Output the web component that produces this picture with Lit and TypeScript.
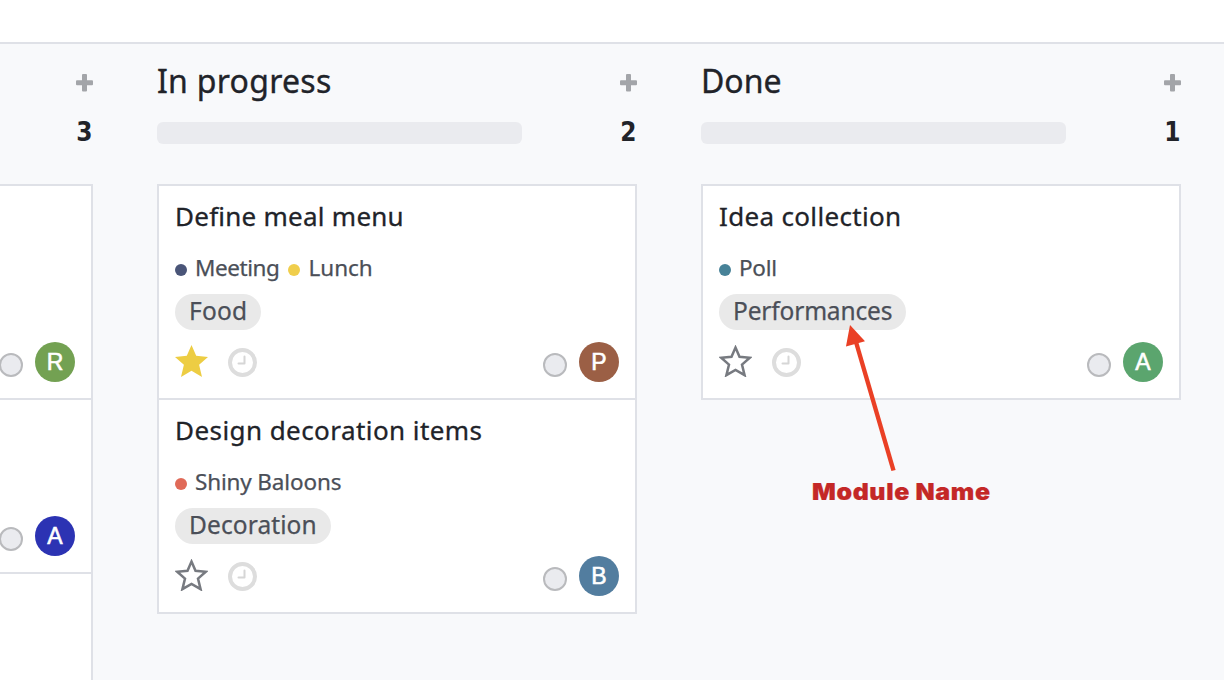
import { LitElement, html, css, svg } from "lit";
import { customElement, property } from "lit/decorators.js";

/** Single-line text whose tracking is adjusted so that it fills `width` pixels. */
@customElement("fit-text")
class FitText extends LitElement {
  @property() text = "";
  @property({ type: Number }) width = 0;

  static styles = css`
    :host { display: inline-block; white-space: pre; }
    .run { display: inline-block; }
  `;

  updated() {
    const run = this.renderRoot.querySelector(".run") as HTMLElement;
    run.style.letterSpacing = "0px";
    const natural = run.offsetWidth;
    run.style.letterSpacing = (this.width - natural) / this.text.length + "px";
  }

  render() {
    return html`<span class="run">${this.text}</span>`;
  }
}

interface Label { text: string; width: number }
interface Tag extends Label { color: string }
interface Card {
  title?: Label;
  tags?: Tag[];
  module?: Label;
  starred?: boolean;
  initial?: string;
  color?: string;
  size?: string;
}
interface Column { title?: Label; count: number; cards: Card[] }

const columns: Column[] = [
  {
    count: 3,
    cards: [
      { initial: "R", color: "#73a152" },
      { initial: "A", color: "#2c33b3", size: "short" },
      { size: "open" },
    ],
  },
  {
    title: { text: "In progress", width: 175 },
    count: 2,
    cards: [
      {
        title: { text: "Define meal menu", width: 229 },
        tags: [
          { text: "Meeting", width: 85, color: "#4a5578" },
          { text: "Lunch", width: 65, color: "#f0ce4c" },
        ],
        module: { text: "Food", width: 58 },
        starred: true,
        initial: "P",
        color: "#9b5f45",
      },
      {
        title: { text: "Design decoration items", width: 307 },
        tags: [{ text: "Shiny Baloons", width: 147, color: "#e06a58" }],
        module: { text: "Decoration", width: 128 },
        initial: "B",
        color: "#527d9f",
      },
    ],
  },
  {
    title: { text: "Done", width: 81 },
    count: 1,
    cards: [
      {
        title: { text: "Idea collection", width: 182 },
        tags: [{ text: "Poll", width: 39, color: "#478298" }],
        module: { text: "Performances", width: 159 },
        initial: "A",
        color: "#5ba56e",
      },
    ],
  },
];

const STAR = "M16.5 0 L21.2 10.8 L33 11.9 L24.1 19.8 L27 32 L16.5 25.8 L6 32 L8.9 19.8 L0 11.9 L11.8 10.8 Z";
const STAR_OUTLINE = "M16.5 2.6 L20.5 11.8 L30.8 12.7 L23 19.6 L25.6 30.2 L16.5 25 L7.4 30.2 L10 19.6 L2.2 12.7 L12.5 11.8 Z";

@customElement("app-root")
class AppRoot extends LitElement {
  static styles = css`
    :host {
      display: flex;
      flex-direction: column;
      position: relative;
      height: 680px;
      overflow: hidden;
      background: #f8f9fb;
      color: #212329;
      font-family: "Noto Sans", "Open Sans", sans-serif;
    }
    .topbar { flex: none; height: 42px; background: #fff; border-bottom: 2px solid #dfe1e7; }
    .board { flex: 1; min-height: 0; display: flex; justify-content: flex-end; gap: 64px; padding-right: 43px; }
    .column { flex: none; width: 480px; display: flex; flex-direction: column; }
    .head { flex: none; height: 140px; box-sizing: border-box; padding-top: 14px; }
    .row { display: flex; justify-content: space-between; align-items: center; }
    .title-row { height: 48px; }
    .title { font-size: 32px; line-height: 46px; padding-bottom: 2px; -webkit-text-stroke: 0.35px currentColor; }
    .plus { display: block; margin-top: 1px; }
    .count-row { height: 32px; margin-top: 11px; }
    .bar { width: 365px; height: 22px; border-radius: 6px; background: #eaebef; }
    .count {
      font: 700 26.5px/30px "DejaVu Sans", sans-serif; padding: 0 1px 2px 0;
      transform: scaleX(0.88); transform-origin: right;
    }
    .cards { display: flex; flex-direction: column; border: 2px solid #dfe1e7; background: #fff; }
    .card { height: 212px; box-sizing: border-box; padding: 14px 16px 16px; display: flex; flex-direction: column; }
    .card + .card { border-top: 2px solid #dfe1e7; height: 214px; }
    .card + .card.short { height: 174px; }
    .card + .card.open { height: 214px; }
    .name { font-size: 26px; line-height: 32px; -webkit-text-stroke: 0.3px currentColor; }
    .tags {
      display: flex; height: 28px; margin-top: 21px; gap: 9px; color: #4b4f58;
      font-size: 22.5px; line-height: 30px; -webkit-text-stroke: 0.25px currentColor;
    }
    .tag { display: flex; gap: 8px; }
    .dot { width: 12px; height: 12px; border-radius: 50%; margin: 11px 0 0; }
    .module {
      align-self: flex-start; margin-top: 13px; height: 36px; padding: 0 14px; border-radius: 18px;
      background: #e9e9e9; color: #4b4f58; font-size: 24.5px; line-height: 34px;
      -webkit-text-stroke: 0.25px currentColor;
    }
    .foot { display: flex; align-items: center; height: 40px; margin-top: auto; }
    .star { display: block; margin-top: -2px; }
    .clock { display: block; margin: 1px 0 0 20px; }
    .status {
      width: 24px; height: 24px; box-sizing: border-box; border: 2px solid #b9babd; border-radius: 50%;
      background: #eaebef; margin: 6px 12px 0 auto;
    }
    .avatar {
      width: 40px; height: 40px; border-radius: 50%; color: #fff; text-align: center;
      font-family: "Liberation Sans", Arial, sans-serif; font-size: 23px; line-height: 41px;
      -webkit-text-stroke: 0.6px #fff;
    }
    .arrow { position: absolute; left: 840px; top: 320px; }
    .note {
      position: absolute; left: 812px; top: 476px; color: #c42827;
      font: 900 23.5px/32px Inter, Roboto, sans-serif; -webkit-text-stroke: 0.2px #c42827;
      transform: scaleX(1.06); transform-origin: left;
    }
  `;

  label(l: Label, cls = "") {
    return html`<fit-text class=${cls} .text=${l.text} .width=${l.width}></fit-text>`;
  }

  renderStar(on?: boolean) {
    return html`<svg class="star" width="33" height="32" viewBox="0 0 33 32">
      ${on
        ? svg`<path d=${STAR} fill="#edcd43"></path>`
        : svg`<path d=${STAR_OUTLINE} fill="none" stroke="#777a80" stroke-width="2.5"></path>`}
    </svg>`;
  }

  renderCard(c: Card) {
    return html`<div class="card ${c.size ?? ""}">
      ${c.title ? this.label(c.title, "name") : ""}
      ${c.tags
        ? html`<div class="tags">
            ${c.tags.map((t) => html`<div class="tag"><span class="dot" style="background:${t.color}"></span>${this.label({ text: t.text, width: t.width - 1 })}</div>`)}
          </div>`
        : ""}
      ${c.module ? html`<div class="module">${this.label(c.module)}</div>` : ""}
      ${c.initial
        ? html`<div class="foot">
            ${c.title
              ? html`${this.renderStar(c.starred)}
                  <svg class="clock" width="29" height="29" viewBox="0 0 29 29" fill="none">
                    <circle cx="14.5" cy="14.5" r="12.5" stroke="#dddddd" stroke-width="4"></circle>
                    <path d="M16.5 8.5 V15.5 H10.5" stroke="#d6d6d6" stroke-width="2" stroke-linecap="round" stroke-linejoin="round"></path>
                  </svg>`
              : ""}
            <span class="status"></span>
            <span class="avatar" style="background:${c.color}">${c.initial}</span>
          </div>`
        : ""}
    </div>`;
  }

  render() {
    return html`
      <div class="topbar"></div>
      <div class="board">
        ${columns.map(
          (col) => html`<section class="column">
            <div class="head">
              <div class="row title-row">
                <div class="title">${col.title ? this.label(col.title) : ""}</div>
                <svg class="plus" width="17" height="18" viewBox="0 0 17 18" fill="#a3a5a9">
                  <rect x="0" y="6.2" width="17" height="5" rx="1"></rect>
                  <rect x="6" y="0" width="5" height="17.4" rx="1"></rect>
                </svg>
              </div>
              <div class="row count-row">
                <div class="bar"></div>
                <div class="count">${col.count}</div>
              </div>
            </div>
            <div class="cards">${col.cards.map((c) => this.renderCard(c))}</div>
          </section>`
        )}
      </div>
      <svg class="arrow" width="60" height="156" viewBox="840 320 60 156">
        <path d="M856 342 L893.5 470.5" stroke="#ea4025" stroke-width="4.4"></path>
        <path d="M850 325 L865 341.3 L846 346.6 Z" fill="#ea4025"></path>
      </svg>
      ${this.label({ text: "Module Name", width: 168.5 }, "note")}
    `;
  }
}
